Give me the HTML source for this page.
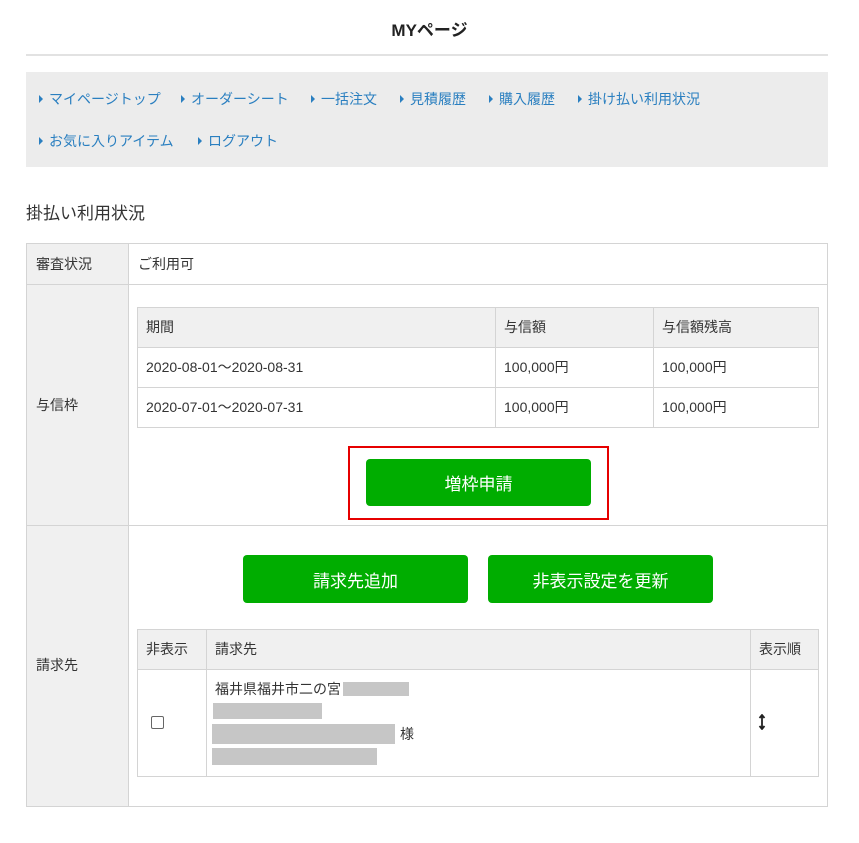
<!DOCTYPE html>
<html><head><meta charset="utf-8"><style>
*{margin:0;padding:0;box-sizing:border-box}
body{width:859px;height:843px;background:#fff;position:relative;font-family:"Liberation Sans","Noto Sans CJK JP",sans-serif;color:#333;font-size:14px;overflow:hidden}
.a{position:absolute}
.t{white-space:nowrap;line-height:1}
.nav{color:#2a7fc0;font-size:14px}
.nav i{display:inline-block;width:0;height:0;border-left:4px solid #2a7fc0;border-top:4px solid transparent;border-bottom:4px solid transparent;margin-right:6px;vertical-align:1px}
.b{border:1px solid #d4d4d4}
.g{background:#f0f0f0}
.btn{background:#00ad00;border-radius:4px;color:#fff;font-size:17px;display:flex;align-items:center;justify-content:center}
.gr{background:#c6c6c6}
</style></head><body>
<div class="a t" style="left:0;width:859px;top:22px;text-align:center;font-weight:bold;font-size:17px;color:#222">MYページ</div>
<div class="a" style="left:26px;top:54px;width:802px;height:2px;background:#e2e2e2"></div>
<div class="a" style="left:26px;top:72px;width:802px;height:95px;background:#ececec"></div>
<div class="a t nav" style="left:39px;top:92px"><i></i>マイページトップ</div>
<div class="a t nav" style="left:181px;top:92px"><i></i>オーダーシート</div>
<div class="a t nav" style="left:311px;top:92px"><i></i>一括注文</div>
<div class="a t nav" style="left:400px;top:92px"><i></i>見積履歴</div>
<div class="a t nav" style="left:489px;top:92px"><i></i>購入履歴</div>
<div class="a t nav" style="left:578px;top:92px"><i></i>掛け払い利用状況</div>
<div class="a t nav" style="left:39px;top:134px"><i></i>お気に入りアイテム</div>
<div class="a t nav" style="left:198px;top:134px"><i></i>ログアウト</div>
<div class="a t" style="left:26px;top:205px;font-size:17px">掛払い利用状況</div>

<div class="a b" style="left:26px;top:243px;width:802px;height:564px"></div>
<div class="a g" style="left:27px;top:244px;width:101px;height:562px"></div>
<div class="a" style="left:128px;top:244px;width:1px;height:562px;background:#d4d4d4"></div>
<div class="a" style="left:27px;top:284px;width:800px;height:1px;background:#d4d4d4"></div>
<div class="a" style="left:27px;top:525px;width:800px;height:1px;background:#d4d4d4"></div>
<div class="a t" style="left:36px;top:257px">審査状況</div>
<div class="a t" style="left:138px;top:257px">ご利用可</div>
<div class="a t" style="left:36px;top:398px">与信枠</div>
<div class="a t" style="left:36px;top:658px">請求先</div>

<div class="a b" style="left:137px;top:307px;width:682px;height:121px"></div>
<div class="a g" style="left:138px;top:308px;width:680px;height:39px"></div>
<div class="a" style="left:138px;top:347px;width:680px;height:1px;background:#d4d4d4"></div>
<div class="a" style="left:138px;top:387px;width:680px;height:1px;background:#d4d4d4"></div>
<div class="a" style="left:495px;top:308px;width:1px;height:119px;background:#d4d4d4"></div>
<div class="a" style="left:653px;top:308px;width:1px;height:119px;background:#d4d4d4"></div>
<div class="a t" style="left:146px;top:320px">期間</div>
<div class="a t" style="left:504px;top:320px">与信額</div>
<div class="a t" style="left:662px;top:320px">与信額残高</div>
<div class="a t" style="left:146px;top:360px">2020-08-01〜2020-08-31</div>
<div class="a t" style="left:504px;top:360px">100,000円</div>
<div class="a t" style="left:662px;top:360px">100,000円</div>
<div class="a t" style="left:146px;top:400px">2020-07-01〜2020-07-31</div>
<div class="a t" style="left:504px;top:400px">100,000円</div>
<div class="a t" style="left:662px;top:400px">100,000円</div>

<div class="a" style="left:348px;top:446px;width:261px;height:74px;border:2px solid #e60000"></div>
<div class="a btn" style="left:366px;top:459px;width:225px;height:47px">増枠申請</div>

<div class="a btn" style="left:243px;top:555px;width:225px;height:48px">請求先追加</div>
<div class="a btn" style="left:488px;top:555px;width:225px;height:48px">非表示設定を更新</div>

<div class="a b" style="left:137px;top:629px;width:682px;height:148px"></div>
<div class="a g" style="left:138px;top:630px;width:680px;height:39px"></div>
<div class="a" style="left:138px;top:669px;width:680px;height:1px;background:#d4d4d4"></div>
<div class="a" style="left:206px;top:630px;width:1px;height:146px;background:#d4d4d4"></div>
<div class="a" style="left:750px;top:630px;width:1px;height:146px;background:#d4d4d4"></div>
<div class="a t" style="left:146px;top:642px">非表示</div>
<div class="a t" style="left:215px;top:642px">請求先</div>
<div class="a t" style="left:759px;top:642px">表示順</div>
<div class="a" style="left:151px;top:716px;width:13px;height:13px;border:1px solid #666;border-radius:2px;background:#fff"></div>
<div class="a t" style="left:215px;top:682px">福井県福井市二の宮</div>
<div class="a gr" style="left:343px;top:682px;width:66px;height:14px"></div>
<div class="a gr" style="left:213px;top:703px;width:109px;height:16px"></div>
<div class="a gr" style="left:212px;top:724px;width:183px;height:20px"></div>
<div class="a t" style="left:400px;top:727px">様</div>
<div class="a gr" style="left:212px;top:748px;width:165px;height:17px"></div>
<svg class="a" style="left:758px;top:714px" width="8" height="16" viewBox="0 0 8 16"><path d="M4 1V15M1.5 4L4 1L6.5 4M1.5 12L4 15L6.5 12" stroke="#222" stroke-width="1.8" fill="none"/></svg>
</body></html>
